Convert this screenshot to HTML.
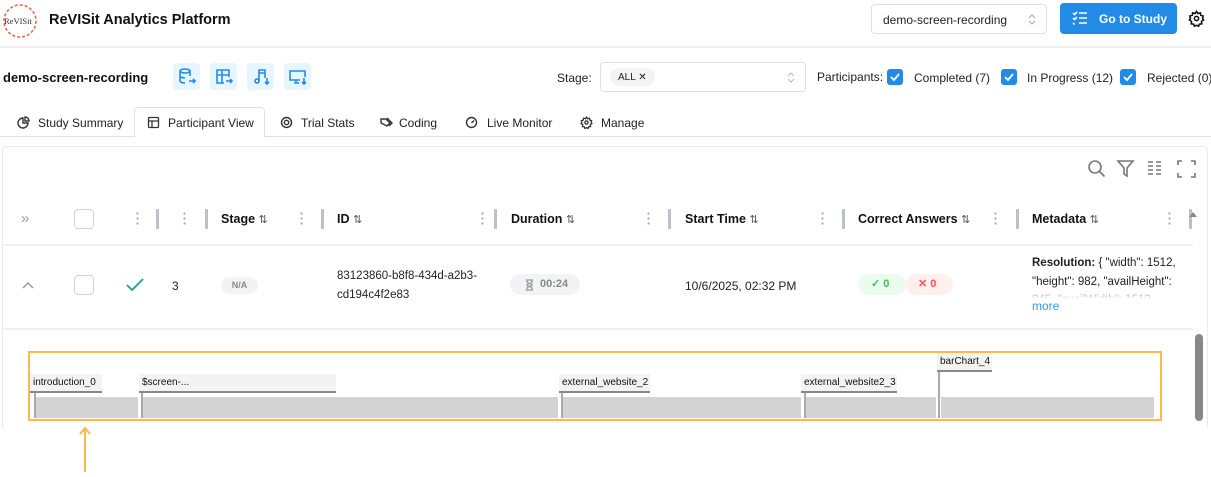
<!DOCTYPE html>
<html><head><meta charset="utf-8"><style>
*{box-sizing:border-box;margin:0;padding:0}
body{width:1211px;height:477px;overflow:hidden;background:#fff;font-family:"Liberation Sans",sans-serif;color:#222;position:relative;font-size:12px}
.a{position:absolute;white-space:nowrap}
.b{font-weight:bold}
.ic{position:absolute;width:27px;height:27px;background:#e7f5ff;border-radius:4px}
.cb{position:absolute;width:16px;height:16px;background:#228be6;border-radius:3px}
.cb svg{position:absolute;left:2px;top:2px}
.sep{position:absolute;width:3px;height:20px;background:#bbc1c8;top:209px;border-radius:1px}
.dots{position:absolute;top:211px;width:3px;height:14px;background:radial-gradient(circle,#aaa 1px,transparent 1.3px) 0 0/3px 5px repeat-y}
.hd{position:absolute;top:212px;font-weight:bold;font-size:12.5px;color:#111;white-space:nowrap}
.hd span{font-weight:normal;font-size:11px;color:#555}
.lab{position:absolute;background:#f3f3f3;border-bottom:2px solid #888;font-size:10px;color:#111;padding:2px 3px;height:19px;line-height:14px;white-space:nowrap}
.tick{position:absolute;width:2px;background:#aaa}
.bar{position:absolute;top:397px;height:21px;background:#d3d3d3}
.tab{position:absolute;top:116px;font-size:12px;color:#222;white-space:nowrap}
.ti{position:absolute;top:116px}
</style></head><body>
<!-- logo -->
<svg class="a" style="left:0;top:2px" width="40" height="38" viewBox="0 0 40 38"><circle cx="20" cy="19" r="16" fill="none" stroke="#e8624a" stroke-width="1.5" stroke-dasharray="3 2"/><text x="4" y="22" font-family="Liberation Serif" font-size="8.5" fill="#333">ReVISit</text></svg>
<div class="a b" style="left:49px;top:12px;font-size:14.5px;color:#111">ReVISit Analytics Platform</div>
<div class="a" style="left:871px;top:4px;width:176px;height:30px;border:1px solid #dde0e4;border-radius:4px;font-size:12px;padding:8px 11px">demo-screen-recording<svg class="a" style="right:10px;top:9px" width="8" height="11" viewBox="0 0 8 11" fill="none" stroke="#aaa" stroke-width="1"><path d="M1 4l3-3 3 3M1 7l3 3 3-3"/></svg></div>
<div class="a" style="left:1060px;top:3px;width:117px;height:31px;background:#228be6;border-radius:4px;color:#fff;font-weight:bold;font-size:12px;padding:9px 0 0 39px">Go to Study
<svg class="a" style="left:12px;top:8px" width="16" height="14" viewBox="0 0 16 14" fill="none" stroke="#fff" stroke-width="1.6"><path d="M1 2l1.5 1.5L5 1M1 7l1.5 1.5L5 6M1 12l1.5 1.5M7 2h8M7 7h8M7 12h8"/></svg></div>
<svg class="a" style="left:1188px;top:10px" width="17" height="17" viewBox="0 0 24 24" fill="none" stroke="#111" stroke-width="2.2"><circle cx="12" cy="12" r="3"/><path d="M12 2l2 3 3.5-1 .5 3.5 3.5 1-1 3.5 1.5 2-3 2 .5 3.5-3.5.5-1 3-3-1.5-3 1.5-1-3-3.5-.5.5-3.5-3-2 1.5-2-1-3.5 3.5-1 .5-3.5 3.5 1z"/></svg>
<div class="a" style="left:0;top:46px;width:1211px;height:2px;background:#eeeff1"></div>
<!-- row 2 -->
<div class="a b" style="left:3px;top:70px;font-size:13px;color:#111">demo-screen-recording</div>
<div class="ic" style="left:173px;top:63px"><svg width="27" height="27" viewBox="0 0 27 27" fill="none" stroke="#228be6" stroke-width="1.6"><ellipse cx="12" cy="8" rx="5" ry="2"/><path d="M7 8v10c0 1 2 2 5 2M17 8v5M7 13c0 1 2 2 5 2M16 18h6M20 16l2 2-2 2"/></svg></div>
<div class="ic" style="left:210px;top:63px"><svg width="27" height="27" viewBox="0 0 27 27" fill="none" stroke="#228be6" stroke-width="1.6"><path d="M14 20H7V7h12v7M7 12h12M12 7v13M16 18h6M20 16l2 2-2 2"/></svg></div>
<div class="ic" style="left:247px;top:63px"><svg width="27" height="27" viewBox="0 0 27 27" fill="none" stroke="#228be6" stroke-width="1.6"><circle cx="10" cy="18" r="2"/><path d="M12 18V7h6v8M12 10h6M20 15v6M18 19l2 2 2-2"/></svg></div>
<div class="ic" style="left:284px;top:63px"><svg width="27" height="27" viewBox="0 0 27 27" fill="none" stroke="#228be6" stroke-width="1.6"><path d="M16 17H6V8h15v6M10 20h5M12 17v3M20 15v6M18 19l2 2 2-2"/></svg></div>
<div class="a" style="left:557px;top:71px;font-size:12px">Stage:</div>
<div class="a" style="left:600px;top:62px;width:206px;height:30px;border:1px solid #dde0e4;border-radius:4px"><div class="a" style="left:9px;top:5px;height:18px;padding:4px 8px;background:#f1f3f5;border-radius:9px;font-size:10px">ALL ✕</div><svg class="a" style="right:10px;top:9px" width="8" height="11" viewBox="0 0 8 11" fill="none" stroke="#bbb" stroke-width="1"><path d="M1 4l3-3 3 3M1 7l3 3 3-3"/></svg></div>
<div class="a" style="left:817px;top:70px;font-size:12px">Participants:</div>
<div class="cb" style="left:887px;top:69px"><svg width="12" height="12" viewBox="0 0 12 12" fill="none" stroke="#fff" stroke-width="1.8"><path d="M2 6l3 3 5-6"/></svg></div>
<div class="a" style="left:914px;top:71px;font-size:12px">Completed (7)</div>
<div class="cb" style="left:1001px;top:69px"><svg width="12" height="12" viewBox="0 0 12 12" fill="none" stroke="#fff" stroke-width="1.8"><path d="M2 6l3 3 5-6"/></svg></div>
<div class="a" style="left:1027px;top:71px;font-size:12px">In Progress (12)</div>
<div class="cb" style="left:1120px;top:69px"><svg width="12" height="12" viewBox="0 0 12 12" fill="none" stroke="#fff" stroke-width="1.8"><path d="M2 6l3 3 5-6"/></svg></div>
<div class="a" style="left:1147px;top:71px;font-size:12px">Rejected (0)</div>
<!-- tabs -->
<div class="a" style="left:0;top:136px;width:1211px;height:1px;background:#dee2e6"></div>
<div class="a" style="left:134px;top:107px;width:131px;height:31px;border:1px solid #dee2e6;border-bottom:1px solid #fff;border-radius:4px 4px 0 0;background:#fff"></div>
<svg class="ti" style="left:17px" width="13" height="13" viewBox="0 0 13 13" fill="none" stroke="#333" stroke-width="1.4"><path d="M6 2a5 5 0 1 0 5 5H6z"/><path d="M8 1a4 4 0 0 1 4 4H8z"/></svg>
<div class="tab" style="left:38px">Study Summary</div>
<svg class="ti" style="left:147px" width="13" height="13" viewBox="0 0 13 13" fill="none" stroke="#333" stroke-width="1.3"><rect x="1.5" y="1.5" width="10" height="10" rx="1"/><path d="M1.5 5h10M5 5v6.5"/></svg>
<div class="tab" style="left:168px">Participant View</div>
<svg class="ti" style="left:280px" width="13" height="13" viewBox="0 0 13 13" fill="none" stroke="#333" stroke-width="1.4"><circle cx="6.5" cy="6.5" r="5"/><circle cx="6.5" cy="6.5" r="2.2"/></svg>
<div class="tab" style="left:301px">Trial Stats</div>
<svg class="ti" style="left:379px" width="14" height="13" viewBox="0 0 14 13" fill="none" stroke="#333" stroke-width="1.4"><path d="M2 3h5l4 4-3 3-6-3z"/><path d="M8 2l5 5-3 3"/></svg>
<div class="tab" style="left:399px">Coding</div>
<svg class="ti" style="left:465px" width="13" height="13" viewBox="0 0 13 13" fill="none" stroke="#333" stroke-width="1.4"><circle cx="6.5" cy="6.5" r="5"/><path d="M6.5 7l2.5-2.5"/></svg>
<div class="tab" style="left:487px">Live Monitor</div>
<svg class="ti" style="left:580px" width="13" height="13" viewBox="0 0 24 24" fill="none" stroke="#333" stroke-width="2.4"><circle cx="12" cy="12" r="3"/><path d="M12 2l2 3 3.5-1 .5 3.5 3.5 1-1 3.5 1.5 2-3 2 .5 3.5-3.5.5-1 3-3-1.5-3 1.5-1-3-3.5-.5.5-3.5-3-2 1.5-2-1-3.5 3.5-1 .5-3.5 3.5 1z"/></svg>
<div class="tab" style="left:601px">Manage</div>
<!-- panel -->
<div class="a" style="left:2px;top:146px;width:1206px;height:282px;border:1px solid #e9ecef;border-bottom:none;border-radius:4px 4px 0 0"></div>
<svg class="a" style="left:1087px;top:159px" width="110" height="20" viewBox="0 0 110 20" fill="none" stroke="#777" stroke-width="1.6"><circle cx="8" cy="8" r="6"/><path d="M12.5 12.5l5 5M31 2h15l-6 7v8l-3-2V9z"/><path d="M61 3h5M61 7h5M61 11h5M61 15h5M69 3h5M69 7h5M69 11h5M69 15h5"/><path d="M91 6V2h4M104 2h4v4M91 14v4h4M104 18h4v-4"/></svg>
<!-- header row -->
<div class="a" style="left:3px;top:244px;width:1190px;height:2px;background:#eef0f2"></div>
<div class="a" style="left:21px;top:210px;color:#999;font-size:15px">»</div>
<div class="a" style="left:74px;top:209px;width:20px;height:20px;border:1px solid #ced4da;border-radius:4px"></div>
<div class="dots" style="left:136px"></div><div class="sep" style="left:156px"></div>
<div class="dots" style="left:183px"></div><div class="sep" style="left:205px"></div>
<div class="hd" style="left:221px">Stage <span>⇅</span></div><div class="dots" style="left:300px"></div><div class="sep" style="left:321px"></div>
<div class="hd" style="left:337px">ID <span>⇅</span></div><div class="dots" style="left:481px"></div><div class="sep" style="left:494px"></div>
<div class="hd" style="left:511px">Duration <span>⇅</span></div><div class="dots" style="left:647px"></div><div class="sep" style="left:668px"></div>
<div class="hd" style="left:685px">Start Time <span>⇅</span></div><div class="dots" style="left:821px"></div><div class="sep" style="left:842px"></div>
<div class="hd" style="left:858px">Correct Answers <span>⇅</span></div><div class="dots" style="left:994px"></div><div class="sep" style="left:1016px"></div>
<div class="hd" style="left:1032px">Metadata <span>⇅</span></div><div class="dots" style="left:1168px"></div><div class="sep" style="left:1189px"></div>
<!-- body row -->
<svg class="a" style="left:21px;top:280px" width="14" height="10" viewBox="0 0 14 10" fill="none" stroke="#999" stroke-width="1.4"><path d="M2 8l5-5 5 5"/></svg>
<div class="a" style="left:74px;top:275px;width:20px;height:20px;border:1px solid #ced4da;border-radius:4px"></div>
<svg class="a" style="left:126px;top:278px" width="18" height="14" viewBox="0 0 18 14" fill="none" stroke="#12a594" stroke-width="1.8"><path d="M1 7l5 5L17 1"/></svg>
<div class="a" style="left:172px;top:279px;font-size:12px">3</div>
<div class="a" style="left:221px;top:277px;width:37px;height:17px;background:#f1f3f5;border-radius:9px;color:#888;font-size:9px;font-weight:bold;text-align:center;line-height:17px">N/A</div>
<div class="a" style="left:337px;top:267px;font-size:11.5px;line-height:19px">83123860-b8f8-434d-a2b3-<br>cd194c4f2e83</div>
<div class="a" style="left:510px;top:274px;width:70px;height:21px;background:#f1f3f5;border-radius:11px;color:#888;font-size:11px;font-weight:bold;line-height:21px;padding-left:30px">00:24<svg class="a" style="left:15px;top:5px" width="9" height="12" viewBox="0 0 9 12" fill="none" stroke="#999" stroke-width="1.3"><path d="M1 1h7M1 11h7M2 1v2c0 1.5 5 1.5 5 3s-5 1.5-5 3v2M7 1v2c0 1.5-5 1.5-5 3s5 1.5 5 3v2"/></svg></div>
<div class="a" style="left:685px;top:279px;font-size:12px">10/6/2025, 02:32 PM</div>
<div class="a" style="left:858px;top:274px;width:48px;height:21px;background:#ebfbee;border-radius:11px;color:#40c057;font-size:11px;font-weight:bold;line-height:21px;padding-left:13px">✓ 0</div>
<div class="a" style="left:906px;top:274px;width:47px;height:21px;background:#fff0f0;border-radius:11px;color:#fa5252;font-size:11px;font-weight:bold;line-height:21px;padding-left:12px">✕ 0</div>
<div class="a" style="left:1032px;top:254px;font-size:11.5px;line-height:18.5px;width:160px;height:44px;overflow:hidden;white-space:normal"><b>Resolution:</b> { "width": 1512, "height": 982, "availHeight": 945, "availWidth": 1512</div>
<div class="a" style="left:1030px;top:291px;width:162px;height:8px;background:linear-gradient(rgba(255,255,255,.4),#fff)"></div>
<div class="a" style="left:1032px;top:299px;font-size:12px;color:#339af0">more</div>
<div class="a" style="left:3px;top:328px;width:1190px;height:2px;background:#eef0f2"></div>
<!-- scrollbar -->
<div class="a" style="left:1189px;top:212px;width:0;height:0;border-left:4px solid transparent;border-right:4px solid transparent;border-bottom:5px solid #888"></div>
<div class="a" style="left:1195px;top:334px;width:8px;height:87px;background:#888;border-radius:4px"></div>
<!-- timeline -->
<div class="a" style="left:28px;top:351px;width:1134px;height:70px;border:2px solid #ffb84d"></div>
<div class="bar" style="left:35px;width:103px"></div>
<div class="bar" style="left:143px;width:415px"></div>
<div class="bar" style="left:563px;width:238px"></div>
<div class="bar" style="left:806px;width:130px"></div>
<div class="bar" style="left:941px;width:213px"></div>
<div class="lab" style="left:30px;top:374px;width:72px">introduction_0</div>
<div class="lab" style="left:139px;top:374px;width:197px">$screen-...</div>
<div class="lab" style="left:559px;top:374px;width:91px">external_website_2</div>
<div class="lab" style="left:801px;top:374px;width:96px">external_website2_3</div>
<div class="lab" style="left:937px;top:353px;width:55px">barChart_4</div>
<div class="tick" style="left:34px;top:393px;height:25px"></div>
<div class="tick" style="left:141px;top:393px;height:25px"></div>
<div class="tick" style="left:561px;top:393px;height:25px"></div>
<div class="tick" style="left:804px;top:393px;height:25px"></div>
<div class="tick" style="left:938px;top:372px;height:46px"></div>
<svg class="a" style="left:78px;top:426px" width="14" height="46" viewBox="0 0 14 46" fill="none" stroke="#ffb84d" stroke-width="2"><path d="M7 2v44M2 8l5-6 5 6"/></svg>
</body></html>
